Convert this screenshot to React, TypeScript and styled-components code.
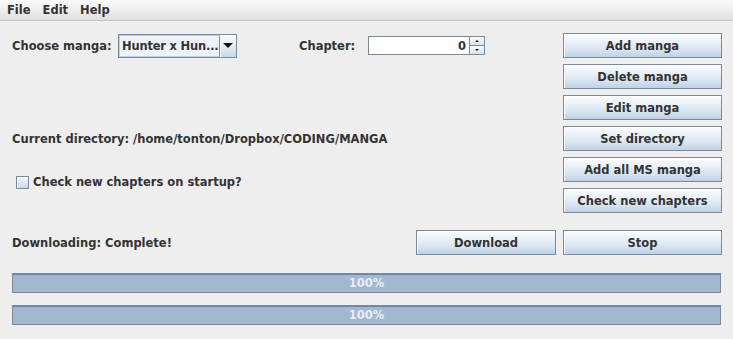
import React from "react";
import styled, { createGlobalStyle } from "styled-components";

const Global = createGlobalStyle`
  html, body { margin: 0; padding: 0; background: #eeeeee; }
  body { font-family: "DejaVu Sans", "Liberation Sans", sans-serif; font-size: 11.5px; font-weight: bold; color: #333333; }
  * { box-sizing: border-box; }
`;

const Frame = styled.div`
  width: 733px;
  height: 339px;
  background: #eeeeee;
  overflow: hidden;
`;

const MenuBar = styled.div`
  display: flex;
  align-items: center;
  height: 21px;
  padding-left: 1px;
  background: linear-gradient(to bottom, #fafafa 0%, #eeeeee 50%, #dedede 100%);
  border-bottom: 1px solid #c6c6c6;
`;

const MenuItem = styled.span`
  padding: 0 6px;
  line-height: 20px;
  color: #333333;
`;

const Body = styled.div`
  padding: 12px 12px 0 12px;
`;

const MainGrid = styled.div`
  display: grid;
  grid-template-columns: 1fr 159px;
  grid-template-rows: repeat(6, 25px) 5px 25px;
  column-gap: 7px;
  row-gap: 6px;
`;

const Cell = styled.div<{ $row: string; $col: string; $top?: number }>`
  grid-row: ${(p) => p.$row};
  grid-column: ${(p) => p.$col};
  display: flex;
  align-items: ${(p) => (p.$top !== undefined ? "flex-start" : "center")};
  padding-top: ${(p) => p.$top ?? 0}px;
`;

const Label = styled.span<{ $w?: number }>`
  display: inline-block;
  width: ${(p) => (p.$w ? `${p.$w}px` : "auto")};
  white-space: nowrap;
  flex: none;
`;

const Button = styled.button<{ $w?: number }>`
  width: ${(p) => (p.$w ? `${p.$w}px` : "100%")};
  height: 25px;
  margin: 0;
  padding: 0;
  font: inherit;
  color: #333333;
  border: 1px solid #7a8a99;
  box-shadow: inset 1px 1px 0 #ffffff;
  background: linear-gradient(to bottom, #fbfcfe 0%, #eaf1f8 35%, #d6e3f0 70%, #bdd1e6 100%);
  cursor: default;
`;

const Combo = styled.div`
  display: flex;
  width: 119px;
  height: 24px;
  border: 1px solid #7a8a99;
  background: #eef3f9;
`;

const ComboText = styled.div`
  flex: 1;
  display: flex;
  align-items: center;
  padding-left: 2px;
  border: 1px solid #b8cfe5;
  border-right: 1px solid #7a8a99;
  background: #eef3f9;
  white-space: nowrap;
  letter-spacing: -0.2px;
`;

const ComboArrow = styled.div`
  width: 19px;
  display: flex;
  align-items: center;
  justify-content: center;
  background: linear-gradient(to bottom, #fbfcfe 0%, #e4edf6 50%, #c4d6e9 100%);
  box-shadow: inset 1px 1px 0 #ffffff;
`;

const Spinner = styled.div`
  display: flex;
  width: 117px;
  height: 19px;
`;

const SpinField = styled.div`
  flex: 1;
  display: flex;
  align-items: center;
  justify-content: flex-end;
  padding-right: 3px;
  background: #ffffff;
  border: 1px solid #7a8a99;
  border-right: none;
`;

const SpinButtons = styled.div`
  width: 16px;
  display: flex;
  flex-direction: column;
  border: 1px solid #7a8a99;
`;

const SpinBtn = styled.div<{ $down?: boolean }>`
  flex: 1;
  display: flex;
  align-items: center;
  justify-content: center;
  background: linear-gradient(to bottom, #fbfcfe, #d6e3f0);
  border-top: ${(p) => (p.$down ? "1px solid #7a8a99" : "none")};
`;

const Row = styled.div`
  display: flex;
  align-items: center;
  width: 100%;
`;

const Spacer = styled.div<{ $w: number }>`
  width: ${(p) => p.$w}px;
  flex: none;
`;

const CheckRow = styled.label`
  display: flex;
  align-items: center;
  gap: 4px;
  padding-left: 4px;
`;

const CheckBox = styled.span`
  width: 13px;
  height: 13px;
  border: 1px solid #7a8a99;
  background: linear-gradient(to bottom, #f6f9fc, #c6d7ea);
  box-shadow: inset 1px 1px 0 #ffffff;
  flex: none;
`;

const ProgressStack = styled.div`
  display: flex;
  flex-direction: column;
  gap: 12px;
  margin-top: 18px;
`;

const Progress = styled.div`
  height: 20px;
  border: 1px solid #7a8a99;
  box-shadow: inset 0 1px 0 #6584bd;
  background: #a3b8cf;
  display: flex;
  align-items: center;
  justify-content: center;
  color: #e9eef5;
`;

const Tri = ({ up, size }: { up?: boolean; size: number }) => (
  <svg width={size * 2} height={size} viewBox={`0 0 ${size * 2} ${size}`}>
    <polygon
      points={up ? `${size},0 0,${size} ${size * 2},${size}` : `0,0 ${size * 2},0 ${size},${size}`}
      fill="#111"
    />
  </svg>
);

const rightButtons = [
  "Add manga",
  "Delete manga",
  "Edit manga",
  "Set directory",
  "Add all MS manga",
  "Check new chapters",
];

export default function App() {
  return (
    <Frame>
      <Global />
      <MenuBar>
        <MenuItem>File</MenuItem>
        <MenuItem>Edit</MenuItem>
        <MenuItem>Help</MenuItem>
      </MenuBar>
      <Body>
        <MainGrid>
          <Cell $row="1" $col="1">
            <Row>
              <Label $w={106}>Choose manga:</Label>
              <Combo>
                <ComboText>Hunter x Hun...</ComboText>
                <ComboArrow>
                  <Tri size={5} />
                </ComboArrow>
              </Combo>
              <Spacer $w={62} />
              <Label $w={69}>Chapter:</Label>
              <Spinner>
                <SpinField>0</SpinField>
                <SpinButtons>
                  <SpinBtn>
                    <Tri up size={2} />
                  </SpinBtn>
                  <SpinBtn $down>
                    <Tri size={2} />
                  </SpinBtn>
                </SpinButtons>
              </Spinner>
            </Row>
          </Cell>
          {rightButtons.map((t, i) => (
            <Cell key={t} $row={String(i + 1)} $col="2">
              <Button>{t}</Button>
            </Cell>
          ))}
          <Cell $row="4" $col="1">
            <Label>Current directory: /home/tonton/Dropbox/CODING/MANGA</Label>
          </Cell>
          <Cell $row="5 / span 2" $col="1" $top={18}>
            <CheckRow>
              <CheckBox />
              <span>Check new chapters on startup?</span>
            </CheckRow>
          </Cell>
          <Cell $row="8" $col="1">
            <Row>
              <Label $w={404}>Downloading: Complete!</Label>
              <Button $w={140}>Download</Button>
            </Row>
          </Cell>
          <Cell $row="8" $col="2">
            <Button>Stop</Button>
          </Cell>
        </MainGrid>
        <ProgressStack>
          <Progress>100%</Progress>
          <Progress>100%</Progress>
        </ProgressStack>
      </Body>
    </Frame>
  );
}
